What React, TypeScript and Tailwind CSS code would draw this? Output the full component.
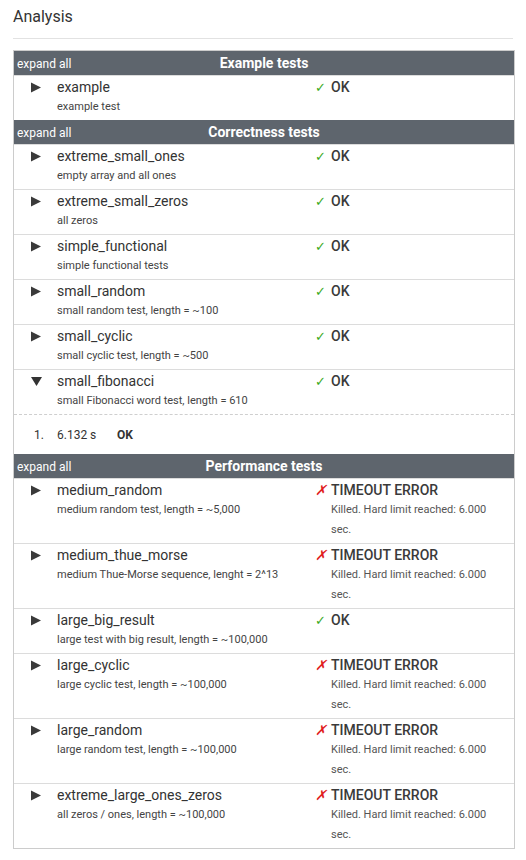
import React from 'react';

type Test = {
  name: string;
  desc: string;
  ok: boolean;
  open?: boolean;
};

const groups: { title: string; tests: Test[] }[] = [
  {
    title: 'Example tests',
    tests: [{ name: 'example', desc: 'example test', ok: true }],
  },
  {
    title: 'Correctness tests',
    tests: [
      { name: 'extreme_small_ones', desc: 'empty array and all ones', ok: true },
      { name: 'extreme_small_zeros', desc: 'all zeros', ok: true },
      { name: 'simple_functional', desc: 'simple functional tests', ok: true },
      { name: 'small_random', desc: 'small random test, length = ~100', ok: true },
      { name: 'small_cyclic', desc: 'small cyclic test, length = ~500', ok: true },
      { name: 'small_fibonacci', desc: 'small Fibonacci word test, length = 610', ok: true, open: true },
    ],
  },
  {
    title: 'Performance tests',
    tests: [
      { name: 'medium_random', desc: 'medium random test, length = ~5,000', ok: false },
      { name: 'medium_thue_morse', desc: 'medium Thue-Morse sequence, lenght = 2^13', ok: false },
      { name: 'large_big_result', desc: 'large test with big result, length = ~100,000', ok: true },
      { name: 'large_cyclic', desc: 'large cyclic test, length = ~100,000', ok: false },
      { name: 'large_random', desc: 'large random test, length = ~100,000', ok: false },
      { name: 'extreme_large_ones_zeros', desc: 'all zeros / ones, length = ~100,000', ok: false },
    ],
  },
];

function Arrow({ open }: { open?: boolean }) {
  return (
    <svg width="11" height="11" viewBox="0 0 11 11" aria-hidden="true">
      {open ? <polygon points="0,1 11,1 5.5,10" fill="#333" /> : <polygon points="0,0.5 10,5.5 0,10.5" fill="#3a3a3a" />}
    </svg>
  );
}

function TestRow({ t }: { t: Test }) {
  return (
    <>
      <div className="flex border-t border-[#dcdcdc] pt-[1px] pb-[3px]">
        <div className="w-[43px] shrink-0 pl-[17px] h-5 flex items-center">
          <Arrow open={t.open} />
        </div>
        <div className="w-[258px] shrink-0">
          <div className="text-[14px] leading-5 text-[#333]">{t.name}</div>
          <div className="text-[11px] leading-5 text-[#444]">{t.desc}</div>
        </div>
        <div className="flex">
          <div className="w-[16px] leading-5">
            {t.ok ? (
              <span className="text-[13px] text-[#3aaa1e]">✓</span>
            ) : (
              <span className="text-[14px] italic text-[#e0201c]">✗</span>
            )}
          </div>
          <div className="w-[166px]">
            <div className="text-[14px] leading-5 font-medium text-[#3a3a3a]">{t.ok ? 'OK' : 'TIMEOUT ERROR'}</div>
            {!t.ok && (
              <div className="text-[11px] leading-5 text-[#555]">Killed. Hard limit reached: 6.000 sec.</div>
            )}
          </div>
        </div>
      </div>
      {t.open && (
        <div className="border-t border-dashed border-[#cfcfcf] h-[40px] flex items-center text-[12px] text-[#333]">
          <span className="w-[43px] pl-[20px]">1.</span>
          <span className="w-[60px]">6.132 s</span>
          <span className="font-bold">OK</span>
        </div>
      )}
    </>
  );
}

export default function App() {
  return (
    <div className="bg-white w-[526px] min-h-[860px] font-['Roboto',sans-serif] px-[13px] pt-[5px]">
      <h2 className="text-[16px] leading-6 text-[#333]">Analysis</h2>
      <div className="mt-[9px] h-px bg-[#e2e2e2] w-[500px]" />
      <div className="mt-[11px] w-[502px] border border-[#cccccc]">
        {groups.map((g) => (
          <div key={g.title}>
            <div className="relative h-[24px] bg-[#5e656d] flex items-center justify-center">
              <span className="absolute left-[3px] top-[3px] text-[12px] leading-5 text-white">expand all</span>
              <span className="text-[14px] font-bold text-white">{g.title}</span>
            </div>
            {g.tests.map((t) => (
              <TestRow key={t.name} t={t} />
            ))}
          </div>
        ))}
      </div>
    </div>
  );
}
